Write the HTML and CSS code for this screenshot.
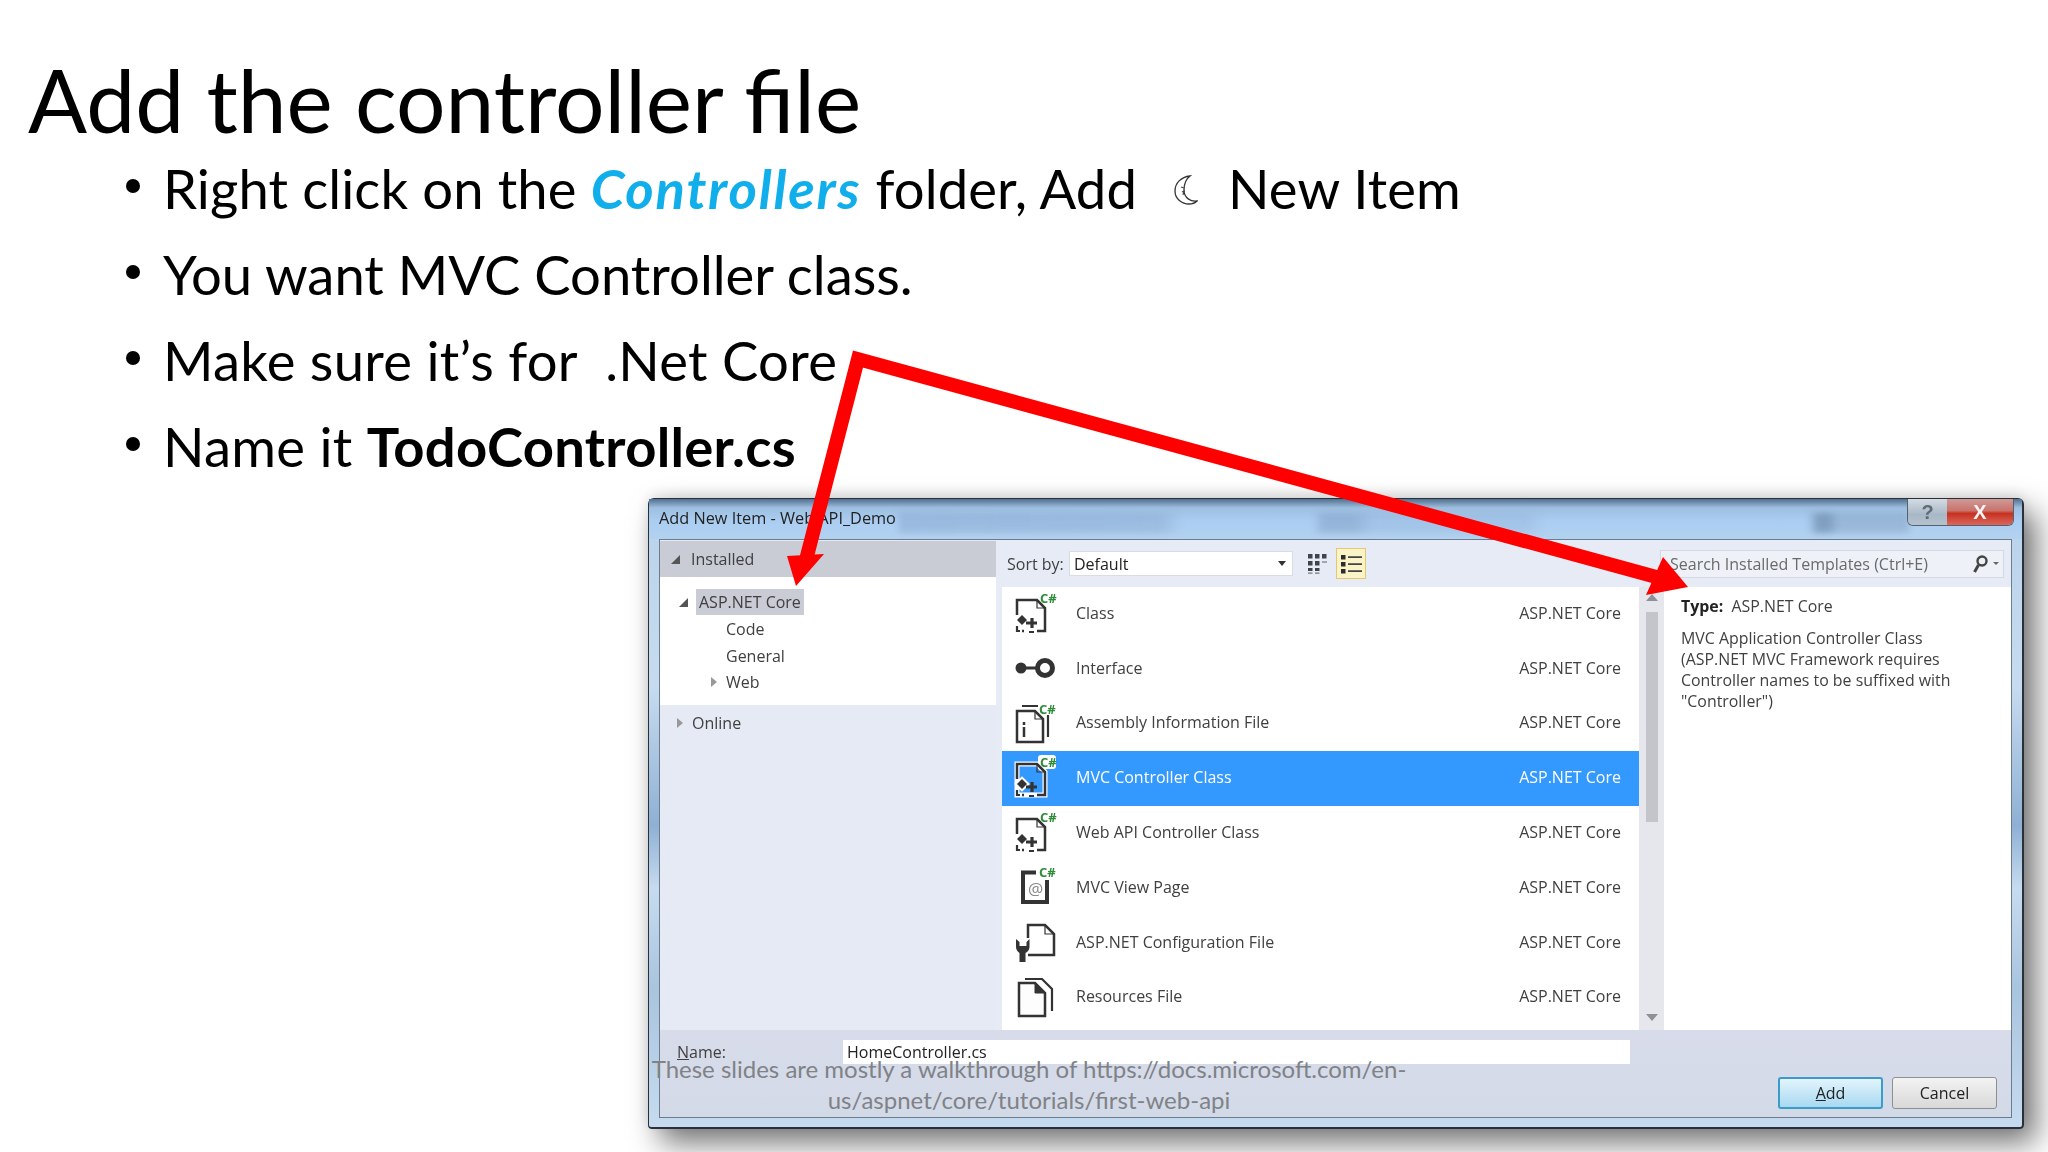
FILE: index.html
```html
<!DOCTYPE html>
<html lang="en">
<head>
<meta charset="utf-8">
<title>Add the controller file</title>
<link rel="stylesheet" href="styles.css">
</head>
<body>
<main class="slide">
  <h1 class="title">Add the controller file</h1>
  <ul class="bullets">
    <li class="first">Right click on the <em class="hl">Controllers</em> folder, Add <svg class="moon" width="24" height="30" viewBox="0 0 24 30"><path d="M16 1C7 2 1 8 1 16c0 8 7 13 14 13 3 0 6-1 8-3-6 1-13-3-13-11 0-6 2-11 6-14z" fill="none" stroke="#333" stroke-width="1.300"/><path d="M7 12l3 1M8 17l2-1-1 4" fill="none" stroke="#444" stroke-width="1.100"/></svg> New Item</li>
    <li>You want MVC Controller class.</li>
    <li class="wide">Make sure it’s for&nbsp; .Net Core</li>
    <li class="wide">Name it <strong>TodoController.cs</strong></li>
  </ul>

  <section class="dialog">
    <header class="titlebar">
      <span class="ghost"></span>
      <span class="cap">Add New Item - Web API_Demo</span>
      <div class="winbtns"><span class="wb help">?</span><span class="wb close">X</span></div>
    </header>
    <div class="client">
      <div class="panes">
        <aside class="left">
          <div class="installed"><i class="tri dn"></i>Installed</div>
          <div class="tree">
            <div class="node top"><i class="tri dn"></i><span class="sel">ASP.NET Core</span></div>
            <div class="node sub">Code</div>
            <div class="node sub">General</div>
            <div class="node web"><i class="tri rt"></i>Web</div>
          </div>
          <div class="online"><i class="tri rt"></i>Online</div>
        </aside>
        <div class="center">
          <div class="toolbar">
            <span class="sortlbl">Sort by:</span>
            <div class="combo"><span>Default</span><i class="caret"></i></div>
            <svg class="gridic" width="20" height="20" viewBox="0 0 20 20"><path d="M1 0h4.500v4.500H1zM8 0h4.500v4.500H8zM15 0h4.500v4.500H15zM1 7h4.500v4.500H1zM8 7h4.500v4.500H8z" fill="#3f444c"/><path d="M15 8h5" stroke="#8a8f98" stroke-width="1.500"/><path d="M1 14h4.500v3H1zM8 14h4.500v3H8z" fill="#3f444c"/><path d="M1 19.200h4.500M8 19.200h4.500" stroke="#777" stroke-width="1.200"/></svg>
            <span class="listbtn"><svg width="22" height="20" viewBox="0 0 22 20"><path d="M1 1h4.500v4.500H1zM1 8h4.500v4.500H1zM1 15h4.500v4.500H1z" fill="#2c2c2c"/><path d="M8 3.200h14M8 10.200h14M8 17.200h14" stroke="#444" stroke-width="1.800"/></svg></span>
            <div class="search"><span>Search Installed Templates (Ctrl+E)</span><svg width="34" height="20" viewBox="0 0 34 20"><circle cx="13" cy="7" r="4.500" fill="none" stroke="#444" stroke-width="2.400"/><path d="M9.500 11l-4 7" stroke="#444" stroke-width="3"/><path d="M24 8h6l-3 3z" fill="#666"/></svg></div>
          </div>
          <div class="body">
            <div class="list">
              <div class="row"><svg class="ic"><use href="#cs"/></svg><span class="nm">Class</span><span class="ty">ASP.NET Core</span></div>
              <div class="row"><svg class="ic"><use href="#iface"/></svg><span class="nm">Interface</span><span class="ty">ASP.NET Core</span></div>
              <div class="row"><svg class="ic"><use href="#asm"/></svg><span class="nm">Assembly Information File</span><span class="ty">ASP.NET Core</span></div>
              <div class="row on"><svg class="ic"><use href="#csw"/></svg><span class="nm">MVC Controller Class</span><span class="ty">ASP.NET Core</span></div>
              <div class="row"><svg class="ic"><use href="#cs"/></svg><span class="nm">Web API Controller Class</span><span class="ty">ASP.NET Core</span></div>
              <div class="row"><svg class="ic"><use href="#view"/></svg><span class="nm">MVC View Page</span><span class="ty">ASP.NET Core</span></div>
              <div class="row"><svg class="ic"><use href="#cfg"/></svg><span class="nm">ASP.NET Configuration File</span><span class="ty">ASP.NET Core</span></div>
              <div class="row"><svg class="ic"><use href="#res"/></svg><span class="nm">Resources File</span><span class="ty">ASP.NET Core</span></div>
            </div>
            <div class="scroll"><i class="su"></i><i class="thumb"></i><i class="sd"></i></div>
            <div class="details">
              <p class="type"><b>Type:</b>&nbsp; ASP.NET Core</p>
              <p class="desc">MVC Application Controller Class<br>(ASP.NET MVC Framework requires<br>Controller names to be suffixed with<br>"Controller")</p>
            </div>
          </div>
        </div>
      </div>
      <footer class="bottom">
        <div class="namerow"><span class="namelbl"><u>N</u>ame:</span><span class="nameinp">HomeController.cs</span></div>
        <div class="btns"><span class="btn add"><u>A</u>dd</span><span class="btn cancel">Cancel</span></div>
      </footer>
    </div>
  </section>

  <p class="caption">These slides are mostly a walkthrough of https://docs.microsoft.com/en-<br>us/aspnet/core/tutorials/first-web-api</p>

  <svg class="arrows" width="2048" height="1152" viewBox="0 0 2048 1152">
    <polyline points="806,560 858,359 1660,578" fill="none" stroke="#fe0000" stroke-width="14" stroke-linejoin="miter" stroke-miterlimit="6"/>
    <polygon points="787,556 824,554 796,586" fill="#fe0000"/>
    <polygon points="1663,557 1646,595 1688,587" fill="#fe0000"/>
  </svg>

  <svg class="defs" width="0" height="0">
    <defs>
      <g id="csdoc">
        <path d="M3 21V6h20l8 8v23h-8M10 37h-2" fill="none" stroke="#333" stroke-width="2.500"/>
        <path d="M23 6v8h8" fill="none" stroke="#333" stroke-width="1.200"/>
        <path d="M3 26l5-5 5 5-5 5z" fill="#333"/>
        <path d="M12 29h11M18 24v10" stroke="#333" stroke-width="3.200" fill="none"/>
        <path d="M3 32v5h3M15 38h5" stroke="#333" stroke-width="2.200" fill="none"/>
      </g>
      <text id="cstag" x="26" y="9" class="cstxt">C#</text>
      <g id="cs"><use href="#csdoc"/><use href="#cstag"/></g>
      <g id="csw">
        <rect x="24" y="-3" width="18" height="14" rx="3" fill="#fff"/>
        <path d="M3 6h20l8 8v23H3z" fill="#3399ff" stroke="#fff" stroke-width="5"/>
        <path d="M3 26l5-5 5 5-5 5z" fill="#fff" stroke="#fff" stroke-width="4"/>
        <use href="#csdoc"/><use href="#cstag"/>
      </g>
      <g id="iface"><circle cx="7" cy="19" r="5.500" fill="#333"/><path d="M10 19h14" stroke="#333" stroke-width="3"/><circle cx="31" cy="19" r="7.500" fill="none" stroke="#333" stroke-width="5"/></g>
      <g id="asm">
        <path d="M8 2h16M34 11v22" fill="none" stroke="#333" stroke-width="2.200"/>
        <path d="M3 7h18l8 8v23H3z" fill="none" stroke="#333" stroke-width="2.500"/>
        <path d="M21 7v8h8" fill="none" stroke="#333" stroke-width="1.200"/>
        <path d="M10 23v10M10 18v3" stroke="#333" stroke-width="2.500"/>
        <text x="25" y="9.700" class="cstxt">C#</text>
      </g>
      <g id="view">
        <path d="M22 4.500H9V34h24V12" fill="none" stroke="#333" stroke-width="4"/>
        <text x="14" y="27" class="attxt">@</text>
        <text x="25" y="9" class="cstxt">C#</text>
      </g>
      <g id="cfg">
        <path d="M14 15V2h17l9 9v21H14" fill="none" stroke="#333" stroke-width="2.500"/>
        <path d="M31 2v9h9" fill="none" stroke="#333" stroke-width="1.200"/>
        <path d="M2 16v8c0 3 2 5 3.500 6v9h6v-9c2-1 4-3 4-6v-8l-3 3v4h-7v-4z" fill="#333"/>
      </g>
      <g id="res">
        <path d="M11 1h17l10 10v22" fill="none" stroke="#333" stroke-width="2.200"/>
        <path d="M5 5h16l10 10v23H5z" fill="#fdfdfd" stroke="#333" stroke-width="2.500"/>
        <path d="M21 5v10h10z" fill="#333" stroke="#333" stroke-width="1"/>
      </g>
    </defs>
  </svg>
</main>
</body>
</html>
```
FILE: styles.css
```css
* { box-sizing: border-box; }
html, body { margin: 0; padding: 0; background: #fff; }
.slide { position: relative; width: 2048px; height: 1152px; overflow: hidden; background: #fff; color: #000; font-family: Lato, sans-serif; }
.title { margin: 0; padding: 48px 0 0 28px; font-size: 87.400px; line-height: 104px; font-weight: 400; height: 145px; }
.bullets { margin: 0; padding: 0 0 0 163px; list-style: none; font-size: 54.400px; }
.bullets li { position: relative; height: 86px; line-height: 86px; white-space: pre-wrap; }
.bullets li::before { content: ""; position: absolute; left: -37px; top: 34px; width: 14px; height: 14px; border-radius: 50%; background: #000; }
.bullets .wide { letter-spacing: .28px; }
.bullets .first { letter-spacing: .12px; }
.hl { color: #10aeea; font-weight: 700; font-style: italic; letter-spacing: 1.800px; }
.moon { vertical-align: 4px; margin: 0 16px 0 23px; }
.bullets strong { font-weight: 700; }

.dialog { width: 1376px; height: 631px; margin: 9px 0 0 648px; border: 1px solid #2a3038; border-bottom-width: 2px; border-right-width: 2px; border-radius: 6px 6px 4px 4px; padding: 0 10px 9px 10px; background: linear-gradient(#b9d2ea, #c6dbef 30%, #8fb0d4 52%, #c6dbef 62%, #a9c4de 78%, #c6dbef); box-shadow: 12px 14px 30px rgba(0,0,0,.55), 0 -4px 14px rgba(0,0,0,.1); font-family: "Open Sans", sans-serif; font-size: 16px; color: #404040; filter: blur(.35px); }
.titlebar { position: relative; display: flex; justify-content: space-between; height: 40px; align-items: center; margin: 0 -10px; padding: 0 8px 0 10px; color: #222; background: linear-gradient(#52708f, #9ebfe0 22%, #aacdf1 55%, #b3d2f0); }
.cap { position: relative; font-size: 16.300px; margin-bottom: 3px; }
.ghost { position: absolute; left: 250px; width: 1010px; top: 14px; height: 20px; background: linear-gradient(90deg, rgba(110,140,180,.28), rgba(110,140,180,.25) 26%, rgba(170,205,240,0) 28%, rgba(170,205,240,0) 41%, rgba(90,120,160,.28) 42%, rgba(90,120,160,.28) 45%, rgba(110,140,180,.14) 47%, rgba(110,140,180,.14) 62%, rgba(170,205,240,0) 64%, rgba(170,205,240,0) 90%, rgba(60,85,115,.38) 91%, rgba(60,85,115,.38) 92%, rgba(120,145,170,.35) 93%, rgba(120,145,170,.35) 100%); filter: blur(3px); }
.winbtns { position: relative; align-self: flex-start; display: flex; height: 27px; border: 1px solid #56616e; border-top: 0; border-radius: 0 0 6px 6px; overflow: hidden; }
.wb { display: flex; align-items: center; justify-content: center; font-family: "Liberation Sans", sans-serif; font-size: 20px; font-weight: 700; }
.help { width: 39px; background: linear-gradient(#d3dbe3, #a9b8c6 60%, #b4c2cf); color: #5d6c78; }
.close { width: 66px; background: linear-gradient(#cf9a96, #c9736c 45%, #c7301f 55%, #d9685c); color: #f4f4f4; }
.client { display: flex; flex-direction: column; height: 579px; border: 1px solid #6b7c8c; background: #e7ebf5; }
.panes { display: flex; height: 490px; flex: none; }
.left { width: 336px; padding-top: 1px; background: #e6eaf4; }
.installed { display: flex; align-items: center; height: 36px; background: #c9cbd5; padding-left: 11px; }
.tree { background: #fff; height: 128px; padding-top: 12px; }
.node { display: flex; align-items: center; height: 26.700px; }
.top { padding-left: 19px; }
.sel { background: #c9cbd5; padding: 0 3px; margin-left: -3px; height: 26px; line-height: 26px; }
.sub { padding-left: 66px; }
.web { padding-left: 51px; }
.online { display: flex; align-items: center; padding-left: 17px; height: 36px; }
.tri { display: inline-block; flex: none; width: 0; height: 0; }
.dn { border-left: 9px solid transparent; border-bottom: 9px solid #555; margin-right: 11px; }
.rt { border-top: 5px solid transparent; border-bottom: 5px solid transparent; border-left: 6px solid #999; margin-right: 9px; }
.center { flex: 1; display: flex; flex-direction: column; }
.toolbar { display: flex; align-items: center; height: 47px; flex: none; padding: 0 7px 0 11px; }
.sortlbl { width: 62px; white-space: nowrap; }
.combo { display: flex; justify-content: space-between; align-items: center; width: 224px; height: 25px; background: #fff; border: 1px solid #d9dce3; padding: 0 6px 0 4px; color: #222; }
.caret { border-left: 4px solid transparent; border-right: 4px solid transparent; border-top: 5px solid #333; }
.gridic { margin-left: 14px; }
.listbtn { display: flex; align-items: center; justify-content: center; width: 30px; height: 31px; margin-left: 9px; background: #fbf3c8; border: 1px solid #e5c96f; }
.search { margin-left: auto; width: 344px; height: 28px; display: flex; align-items: center; justify-content: space-between; background: #eef1f7; border: 1px solid #d5d9e2; padding-left: 9px; color: #6a6a6a; white-space: nowrap; }
.body { flex: 1; display: flex; min-height: 0; }
.list { width: 637px; margin-left: 6px; background: #fff; }
.row { display: flex; align-items: center; height: 54.800px; padding: 0 18px 0 12px; }
.ic { align-self: flex-start; margin-top: 7px; width: 42px; height: 42px; overflow: visible; flex: none; }
.nm { margin-left: 20px; flex: 1; margin-bottom: 3px; }
.ty { margin-bottom: 3px; }
.on { background: #3399ff; color: #fff; }
.cstxt { font: 700 13px "Open Sans", sans-serif; fill: #2e8b3a; }
.attxt { font: 400 17px "Open Sans", sans-serif; fill: #888; }
.scroll { width: 25px; background: #e6e7ec; display: flex; flex-direction: column; align-items: center; padding: 7px 0 9px; }
.scroll i { display: block; flex: none; }
.su { border-left: 6.500px solid transparent; border-right: 6.500px solid transparent; border-bottom: 7px solid #8e9097; }
.sd { margin-top: auto; border-left: 6.500px solid transparent; border-right: 6.500px solid transparent; border-top: 7px solid #8e9097; }
.thumb { margin-top: 11px; width: 12px; height: 210px; background: #c4c5cb; }
.details { flex: 1; background: #fff; padding: 9px 10px 0 17px; line-height: 21px; white-space: nowrap; font-size: 15.900px; }
.details p { margin: 0; }
.type { height: 32px; }
.type b { font-weight: 700; color: #222; }
.bottom { flex: 1; display: flex; flex-direction: column; background: linear-gradient(#d8dcea, #d3dae7); }
.namerow { display: flex; align-items: center; height: 24px; margin-top: 10px; padding-left: 17px; flex: none; }
.namelbl { width: 166px; }
.nameinp { width: 787px; height: 24px; line-height: 24px; background: #fff; padding-left: 4px; color: #222; }
.btns { display: flex; justify-content: flex-end; gap: 9px; margin-top: 13px; padding-right: 14px; }
.btn { display: flex; align-items: center; justify-content: center; width: 105px; height: 32px; border-radius: 3px; color: #222; }
.add { background: linear-gradient(#e3f4fb, #a8d9f2); border: 2px solid #3a9cc8; }
.cancel { background: linear-gradient(#f3f3f3, #d8d8d8); border: 1px solid #8f8f8f; }

.caption { position: absolute; left: 651px; top: 1053px; width: 756px; margin: 0; text-align: center; font-size: 24px; line-height: 31px; color: #7f8287; white-space: nowrap; }
.arrows { position: absolute; left: 0; top: 0; pointer-events: none; }
.defs { position: absolute; }
```
